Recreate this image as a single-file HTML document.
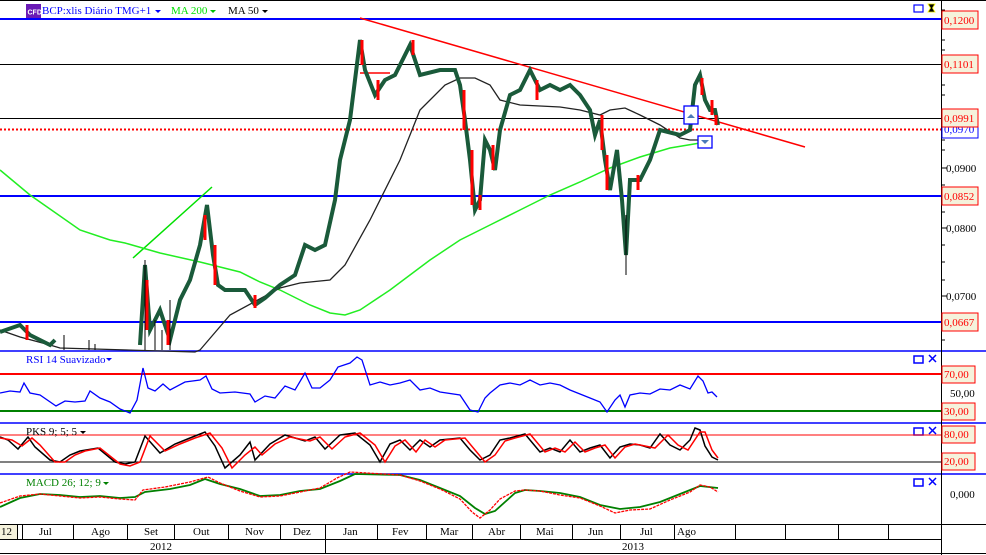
<!DOCTYPE html>
<html><head><meta charset="utf-8"><style>
body{margin:0;width:986px;height:555px;overflow:hidden;background:#fff;font-family:"Liberation Serif",serif}
svg{display:block}
text{font-family:"Liberation Serif",serif;font-size:11px}
</style></head><body>
<svg width="986" height="555" viewBox="0 0 986 555" xmlns="http://www.w3.org/2000/svg">
<rect width="986" height="555" fill="#fff"/>
<line x1="0" y1="0.5" x2="986" y2="0.5" stroke="#000"/>
<line x1="0" y1="19" x2="941" y2="19" stroke="#0000ff" stroke-width="2"/>
<line x1="0" y1="64.5" x2="941" y2="64.5" stroke="#000"/>
<line x1="0" y1="118.5" x2="941" y2="118.5" stroke="#000"/>
<line x1="0" y1="129.5" x2="941" y2="129.5" stroke="#f00" stroke-width="2" stroke-dasharray="2,2"/>
<line x1="0" y1="196" x2="941" y2="196" stroke="#0000ff" stroke-width="2"/>
<line x1="0" y1="322" x2="941" y2="322" stroke="#0000ff" stroke-width="2"/>
<line x1="0" y1="351" x2="986" y2="351" stroke="#0000ff" stroke-width="1.5"/>
<line x1="0" y1="423" x2="986" y2="423" stroke="#0000ff" stroke-width="1.5"/>
<line x1="0" y1="474" x2="986" y2="474" stroke="#0000ff" stroke-width="1.5"/>
<line x1="941.5" y1="0" x2="941.5" y2="555" stroke="#000"/>
<rect x="26" y="4" width="15" height="14" fill="#6a1bb5"/>
<text x="27.5" y="14.5" fill="#fff" style="font-family:'Liberation Sans',sans-serif;font-size:7px;font-weight:bold">CFD</text>
<text x="42" y="14" fill="#0000ff">BCP:xlis Diário TMG+1</text>
<path d="M155 10h6l-3 3z" fill="#0000ff"/>
<text x="171" y="14" fill="#00e000">MA 200</text>
<path d="M210 10h6l-3 3z" fill="#00c000"/>
<text x="228" y="14" fill="#000">MA 50</text>
<path d="M262 10h6l-3 3z" fill="#000"/>
<rect x="914" y="5" width="9" height="7" fill="none" stroke="#0000ff" stroke-width="1.2"/>
<path d="M928 4h7l-2.5 4l2.5 4h-7l2.5-4z" fill="#000" stroke="#ee0" stroke-width="0.8"/>
<line x1="133" y1="258" x2="212" y2="187" stroke="#00e000" stroke-width="1.5"/>
<line x1="360" y1="18" x2="805" y2="147" stroke="#f00" stroke-width="1.5"/>
<line x1="360" y1="73" x2="390" y2="73" stroke="#f00" stroke-width="1.5"/>
<polyline fill="none" stroke="#22ee22" stroke-width="1.5" points="0,170 30,195 80,230 110,240 125,243 160,253 200,262 240,272 260,282 280,290 310,305 330,313 345,315 360,310 390,290 430,260 460,240 490,225 520,210 550,195 580,182 610,168 640,157 670,148 700,143 710,140"/>
<polyline fill="none" stroke="#222" stroke-width="1.3" points="0,330 20,337 50,345 60,348 195,352 200,350 230,315 280,288 300,283 330,280 345,265 370,220 400,160 420,110 445,85 460,78 475,78 490,85 500,100 520,105 560,107 580,110 600,115 610,110 625,108 640,115 660,125 680,138 690,140 700,140"/>
<polyline fill="none" stroke="#1a5a3a" stroke-width="4" points="0,332 20,325 30,335 50,345 55,340"/>
<polyline fill="none" stroke="#1a5a3a" stroke-width="4" points="140,345 145,265 150,330 160,310 170,340 180,300 190,280 200,245 207,205 213,255 218,285 225,290 245,290 255,305 265,298 280,285 295,275 305,245 315,250 325,245 335,200 340,160 350,120 355,80 360,40 365,70 375,95 385,80 395,75 410,45 420,75 440,70 455,70 460,85 465,120 470,160 475,210 480,200 485,140 490,150 495,170 500,130 510,95 520,90 530,70 540,90 550,85 560,90 570,85 580,95 590,110 595,135 600,120 605,160 610,190 617,150 622,200 626,255 630,180 640,180 650,160 660,130 680,135 690,130 695,85 700,75 705,100 710,110 715,110 718,125"/>
<g stroke="#000"><path d="M89 340v10M95 344v6M64 335v15M155 320v30M162 330v20M170 300v50"/></g>
<g stroke="#f00" stroke-width="3">
<line x1="147" y1="280" x2="147" y2="330"/><line x1="205" y1="215" x2="205" y2="240"/><line x1="215" y1="245" x2="215" y2="285"/><line x1="255" y1="295" x2="255" y2="308"/><line x1="362" y1="40" x2="362" y2="65"/><line x1="378" y1="80" x2="378" y2="100"/><line x1="413" y1="40" x2="413" y2="55"/><line x1="464" y1="90" x2="464" y2="130"/><line x1="472" y1="150" x2="472" y2="205"/><line x1="480" y1="195" x2="480" y2="210"/><line x1="493" y1="145" x2="493" y2="170"/><line x1="537" y1="80" x2="537" y2="100"/><line x1="602" y1="115" x2="602" y2="150"/><line x1="607" y1="155" x2="607" y2="190"/><line x1="638" y1="175" x2="638" y2="190"/><line x1="702" y1="78" x2="702" y2="95"/><line x1="712" y1="100" x2="712" y2="115"/><line x1="716" y1="115" x2="716" y2="125"/><line x1="27" y1="325" x2="27" y2="340"/><line x1="168" y1="320" x2="168" y2="345"/>
</g>
<line x1="626" y1="215" x2="626" y2="275" stroke="#000"/>
<line x1="145" y1="260" x2="145" y2="350" stroke="#000"/>
<rect x="684" y="106" width="14" height="18" fill="#fff" stroke="#0000ff" stroke-width="1.3"/>
<path d="M687 118h8l-4-4z" fill="#4a7ab8"/>
<rect x="698" y="136" width="14" height="12" fill="#fff" stroke="#0000ff" stroke-width="1.3"/>
<path d="M701 140h8l-4 4z" fill="#4a7ab8"/>
<g font-size="10">
<rect x="942" y="11" width="36" height="18" fill="#f5f2dc" stroke="#f00"/><text x="944" y="24" fill="#f00">0,1200</text>
<rect x="942" y="55" width="36" height="18" fill="#f5f2dc" stroke="#f00"/><text x="944" y="68" fill="#f00">0,1101</text>
<rect x="942" y="118" width="36" height="20" fill="#fff" stroke="#0000ff"/><text x="944" y="133" fill="#0000ff">0,0970</text>
<rect x="942" y="109" width="36" height="18" fill="#f5f2dc" stroke="#f00"/><text x="944" y="122" fill="#f00">0,0991</text>
<text x="946" y="172" fill="#000">0,0900</text>
<rect x="942" y="187" width="36" height="18" fill="#f5f2dc" stroke="#f00"/><text x="944" y="200" fill="#f00">0,0852</text>
<text x="946" y="232" fill="#000">0,0800</text>
<text x="946" y="300" fill="#000">0,0700</text>
<rect x="942" y="313" width="36" height="18" fill="#f5f2dc" stroke="#f00"/><text x="944" y="326" fill="#f00">0,0667</text>
</g>
<g stroke="#000">
<path d="M941 10h4M941 40h4M941 50h4M941 85h4M941 95h4M941 140h4M941 150h4M941 168h6M941 185h4M941 212h4M941 228h6M941 245h4M941 262h4M941 280h4M941 296h6M941 340h4"/>
</g>
<line x1="0" y1="374" x2="941" y2="374" stroke="#f00" stroke-width="2"/>
<line x1="0" y1="411" x2="941" y2="411" stroke="#008000" stroke-width="2"/>
<text x="26" y="363" fill="#0000ff">RSI 14 Suavizado</text><path d="M106 358h6l-3 3z" fill="#0000ff"/>
<polyline fill="none" stroke="#0000ff" stroke-width="1.3" points="0,393 10,391 20,392 24,383 30,393 40,395 56,406 65,401 75,402 85,401 90,391 100,398 110,402 120,409 130,413 137,400 143,368 148,388 155,391 163,384 170,390 185,382 200,380 206,376 212,389 220,393 235,392 250,394 255,402 265,396 275,398 285,386 295,390 305,373 312,388 320,388 330,380 338,367 350,363 357,357 362,360 370,385 380,382 390,385 400,383 410,380 420,390 430,388 440,392 460,395 470,410 478,412 485,398 490,393 500,385 510,383 520,385 530,380 540,385 550,383 560,385 570,390 580,394 590,398 600,402 607,412 615,400 620,395 625,407 630,395 640,393 650,394 660,389 670,390 680,385 690,389 698,376 703,381 708,393 712,392 717,397"/>
<g font-size="10">
<rect x="942" y="366" width="33" height="17" fill="#f5f2dc" stroke="#f00"/><text x="944" y="378" fill="#f00">70,00</text>
<text x="950" y="397" fill="#000">50,00</text>
<rect x="942" y="403" width="33" height="17" fill="#f5f2dc" stroke="#f00"/><text x="944" y="415" fill="#f00">30,00</text>
<rect x="942" y="426" width="33" height="17" fill="#f5f2dc" stroke="#f00"/><text x="944" y="438" fill="#f00">80,00</text>
<rect x="942" y="453" width="33" height="17" fill="#f5f2dc" stroke="#f00"/><text x="944" y="465" fill="#f00">20,00</text>
<text x="950" y="498" fill="#000">0,000</text>
</g>
<g fill="none" stroke="#0000ff" stroke-width="1.5">
<rect x="914" y="356" width="9" height="7"/><path d="M929 355l7 7M936 355l-7 7"/>
<rect x="914" y="428" width="9" height="7"/><path d="M929 427l7 7M936 427l-7 7"/>
<rect x="914" y="479" width="9" height="7"/><path d="M929 478l7 7M936 478l-7 7"/>
</g>
<line x1="0" y1="435" x2="941" y2="435" stroke="#f00"/>
<line x1="0" y1="462" x2="941" y2="462" stroke="#000"/>
<text x="26" y="435" fill="#000">PKS 9; 5; 5</text><path d="M80 431h6l-3 3z" fill="#000"/>
<polyline fill="none" stroke="#000" stroke-width="1.5" points="0,437 8,440 18,449 28,437 35,447 50,460 60,462 70,455 80,451 98,448 115,462 125,464 135,462 145,436 160,453 175,444 190,438 205,432 215,446 225,468 240,455 250,442 255,460 270,444 285,435 305,441 315,437 325,449 340,435 355,433 370,445 380,462 390,444 400,440 410,450 420,440 430,447 440,440 460,438 470,450 480,460 490,455 500,440 510,438 525,434 540,452 550,448 560,452 570,440 580,452 590,448 600,445 610,458 620,447 630,444 640,445 650,448 660,434 670,445 680,450 690,440 695,428 700,430 705,446 712,457 718,460"/>
<polyline fill="none" stroke="#f00" stroke-width="1.5" points="0,438 12,440 22,446 32,438 40,445 55,462 65,462 75,455 85,451 100,448 120,464 130,466 140,462 150,436 165,451 180,444 195,438 210,433 222,448 232,468 245,455 255,447 262,455 275,444 290,437 310,441 320,437 332,449 345,437 360,433 375,445 385,462 395,446 405,440 416,452 425,440 435,447 445,440 465,438 475,450 485,462 495,455 505,441 515,438 530,434 545,452 555,448 565,452 575,442 585,452 595,448 605,445 615,458 625,447 635,444 645,446 655,448 668,435 678,445 688,450 700,432 705,432 712,450 718,458"/>
<text x="26" y="486" fill="#008000">MACD 26; 12; 9</text><path d="M103 482h6l-3 3z" fill="#008000"/>
<polyline fill="none" stroke="#008000" stroke-width="1.8" points="0,507 20,498 40,494 60,495 80,497 100,496 120,498 135,497 145,492 170,489 190,485 205,479 220,484 240,489 260,496 280,495 300,491 320,489 340,481 355,474 400,475 420,480 440,488 460,496 475,508 485,514 495,511 505,502 515,493 525,490 540,491 560,493 580,497 600,505 620,509 640,507 660,502 680,494 700,486 718,488"/>
<polyline fill="none" stroke="#f00" stroke-width="1.3" stroke-dasharray="3,1" points="0,503 20,496 40,494 60,496 80,498 100,497 120,499 135,500 143,490 165,487 190,482 208,477 220,483 240,491 260,497 280,496 300,492 320,488 337,478 350,472 400,475 420,481 440,489 460,499 472,512 480,518 490,510 500,499 515,491 525,490 540,491 560,495 580,498 600,506 615,513 630,510 650,509 670,500 690,492 700,485 710,487 718,492"/>
<line x1="0" y1="524.5" x2="986" y2="524.5" stroke="#000"/>
<line x1="0" y1="539.5" x2="941" y2="539.5" stroke="#000"/>
<line x1="0" y1="553.5" x2="986" y2="553.5" stroke="#000"/>
<rect x="0" y="525" width="17" height="14" fill="#f5f2dc"/>
<g stroke="#000"><path d="M17.5 525v14M22.5 525v14M73.5 525v14M127.5 525v14M174.5 525v14M228.5 525v14M280.5 525v14M325.5 525v29M377.5 525v14M426.5 525v14M472.5 525v14M520.5 525v14M572.5 525v14M620.5 525v14M674.5 525v14M735.5 525v14M785.5 525v14M838.5 525v14M888.5 525v14"/></g>
<g fill="#000" font-size="11">
<text x="1" y="535">12</text><text x="39" y="535">Jul</text><text x="91" y="535">Ago</text><text x="144" y="535">Set</text><text x="193" y="535">Out</text><text x="245" y="535">Nov</text><text x="293" y="535">Dez</text><text x="343" y="535">Jan</text><text x="392" y="535">Fev</text><text x="440" y="535">Mar</text><text x="488" y="535">Abr</text><text x="536" y="535">Mai</text><text x="588" y="535">Jun</text><text x="640" y="535">Jul</text><text x="677" y="535">Ago</text>
<text x="150" y="550">2012</text><text x="622" y="550">2013</text>
</g>
</svg>
</body></html>
